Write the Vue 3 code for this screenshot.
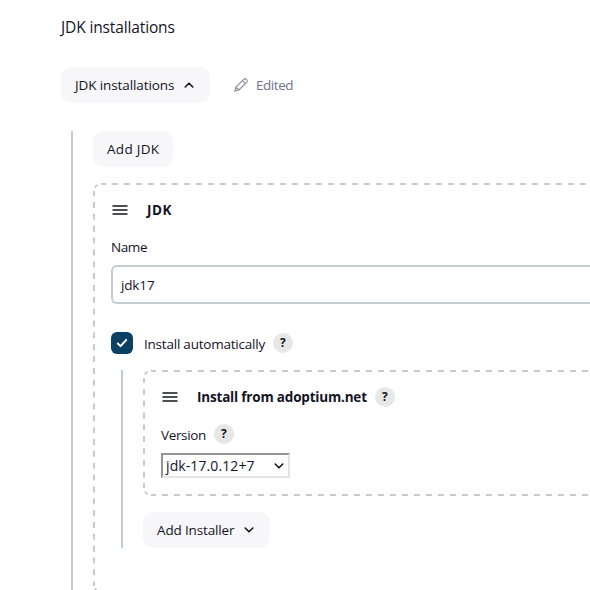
<script setup>
</script>

<template>
  <main class="page">
    <h2 class="title">JDK installations</h2>
    <div class="toolbar">
      <button class="btn"><span class="t-toggle">JDK installations</span>
        <svg class="chev" viewBox="0 0 12 12"><path d="M2.200 8L6 4.200 9.800 8" /></svg>
      </button>
      <span class="edited">
        <svg class="pencil" viewBox="0 0 16 16"><path d="M1.800 14.200l1.200-4L10.700 2.300c.8-.8 1.700-.8 2.400-.1l.7.7c.7.7.7 1.600-.1 2.400L5.800 13zM9.300 3.700l3 3M3 10.200L5.800 13" /></svg>
        <span class="t-edited">Edited</span>
      </span>
    </div>
    <section class="level outer">
      <button class="btn add"><span class="t-add">Add JDK</span></button>
      <div class="chunk jdk">
        <svg class="dashes" width="500" height="409">
          <path class="start" d="M8 1H13M1 8V13" />
          <path class="side" d="M18.800 1H500" />
          <path class="side tight" d="M1 19V403" />
          <path class="corner" d="M1 8A7 7 0 0 1 8 1" />
          <path class="corner" d="M1 402A7 7 0 0 0 8 409" />
        </svg>
        <header class="head">
          <svg class="grip" viewBox="0 0 16 10"><path d="M.5 1h15M.5 9h15" /><path class="mid" d="M.5 5h15" /></svg>
          <b class="t-jdk">JDK</b>
        </header>
        <label class="label name"><span class="t-name">Name</span></label>
        <div class="input"><span class="t-value">jdk17</span></div>
        <div class="check">
          <span class="box"><svg viewBox="0 0 22 22"><path d="M6.800 11.500l2.700 2.700 5.700-6.200" /></svg></span>
          <span class="t-auto">Install automatically</span>
          <span class="help">?</span>
        </div>
        <section class="level inner">
          <div class="chunk installer">
            <svg class="dashes" width="450" height="126">
              <path class="start" d="M8 1H13M1 8V13M8 125H13M1 113V118" />
              <path class="side" d="M19 1H450" />
              <path class="side tight" d="M1 18.700V110" />
              <path class="side" d="M19 125H450" />
              <path class="corner" d="M1 8A7 7 0 0 1 8 1" />
              <path class="corner" d="M1 118A7 7 0 0 0 8 125" />
            </svg>
            <header class="head">
              <svg class="grip" viewBox="0 0 16 10"><path d="M.5 1h15M.5 9h15" /><path class="mid" d="M.5 5h15" /></svg>
              <b class="t-from">Install from adoptium.net</b>
              <span class="help">?</span>
            </header>
            <div class="label version"><span class="t-version">Version</span><span class="help">?</span></div>
            <div class="select"><span class="t-select">jdk-17.0.12+7</span>
              <svg class="chev" viewBox="0 0 12 12"><path d="M2.200 4L6 7.800 9.800 4" /></svg>
            </div>
          </div>
          <button class="btn more"><span class="t-more">Add Installer</span>
            <svg class="chev" viewBox="0 0 12 12"><path d="M2.200 4L6 7.800 9.800 4" /></svg>
          </button>
        </section>
      </div>
    </section>
  </main>
</template>

<style>
body { background: #fff; overflow: hidden; }
</style>

<style scoped>
.page { box-sizing: border-box; width: 590px; height: 590px; overflow: hidden; padding: 15px 0 0 61px; font: 13.5px/20px "Open Sans", "Noto Sans", sans-serif; color: #14141f; white-space: nowrap; }
.title { margin: 0 0 28px; font-size: 15.5px; line-height: 24px; font-weight: 400; letter-spacing: -.13px; }
.toolbar { display: flex; align-items: center; gap: 23px; height: 36px; }
.btn { box-sizing: border-box; display: flex; align-items: center; justify-content: space-between; height: 36px; width: 149px; padding: 0 15px 0 14px; border: 0; border-radius: 10px; background: #f7f7fa; font: inherit; color: inherit; }
.add { width: 80px; }
.more { width: 127px; margin-top: 16px; }
.chev { flex: none; width: 12px; height: 12px; fill: none; stroke: #14141f; stroke-width: 1.6; stroke-linecap: round; stroke-linejoin: round; }
.edited { display: flex; align-items: center; gap: 7px; color: #73738c; }
.pencil { width: 16px; height: 16px; fill: none; stroke: #8a8a9e; stroke-width: 1.1; stroke-linejoin: round; }
.t-toggle { letter-spacing: -.1px; }
.t-edited { letter-spacing: -.45px; }
.t-add { letter-spacing: .3px; }
.t-jdk { letter-spacing: .5px; }
.t-name { letter-spacing: -.4px; }
.t-value { letter-spacing: -.15px; }
.t-auto { letter-spacing: -.22px; padding-top: 2px; }
.t-from { letter-spacing: -.19px; }
.t-version { letter-spacing: -.35px; padding-top: 2px; }
.t-select { font-size: 14px; letter-spacing: .1px; }
.t-more { letter-spacing: -.15px; }
.level { border-left: 2px solid #c3ccd1; padding-left: 20px; }
.outer { margin: 28px 0 0 10px; height: 500px; }
.chunk { position: relative; box-sizing: border-box; padding: 16px 0 0 18px; }
.jdk { margin-top: 16px; height: 409px; }
.installer { height: 126px; }
.dashes { position: absolute; left: 0; top: 0; fill: none; stroke: #c3ccd1; stroke-width: 2; }
.side { stroke-dasharray: 6 6; }
.tight { stroke-dasharray: 6 5.85; }
.corner { stroke-dasharray: 0 3.7 3.6 20; }
.head { display: flex; align-items: center; height: 22px; }
.grip { width: 16px; height: 10px; margin: 0 19px 0 1px; stroke: #14141f; stroke-width: 1.6; }
.mid { stroke: #4e4e59; stroke-width: 2; }
.label { display: flex; align-items: center; height: 20px; }
.name { margin-top: 16px; }
.input { box-sizing: border-box; display: flex; align-items: center; height: 39px; margin-top: 8px; padding-left: 8px; border: 2px solid #c3ccd1; border-right: 0; border-radius: 6px 0 0 6px; }
.check { display: flex; align-items: center; height: 22px; margin-top: 28px; }
.box { width: 22px; height: 22px; margin-right: 11px; border-radius: 6px; background: #0b3f63; }
.box svg { display: block; fill: none; stroke: #fff; stroke-width: 1.9; stroke-linecap: round; stroke-linejoin: round; }
.help { width: 20px; height: 20px; margin-left: 8px; border-radius: 50%; background: #e7e7e7; text-align: center; font-size: 12px; font-weight: 700; line-height: 20px; }
.inner { margin: 16px 0 0 10px; height: 178px; }
.version { margin-top: 16px; }
.select { box-sizing: border-box; display: flex; align-items: center; justify-content: space-between; width: 129px; height: 25px; margin-top: 9px; padding: 0 3px; border: 2px solid; border-color: #949494 #e3e3e3 #e3e3e3 #949494; background: #fff; }
</style>
